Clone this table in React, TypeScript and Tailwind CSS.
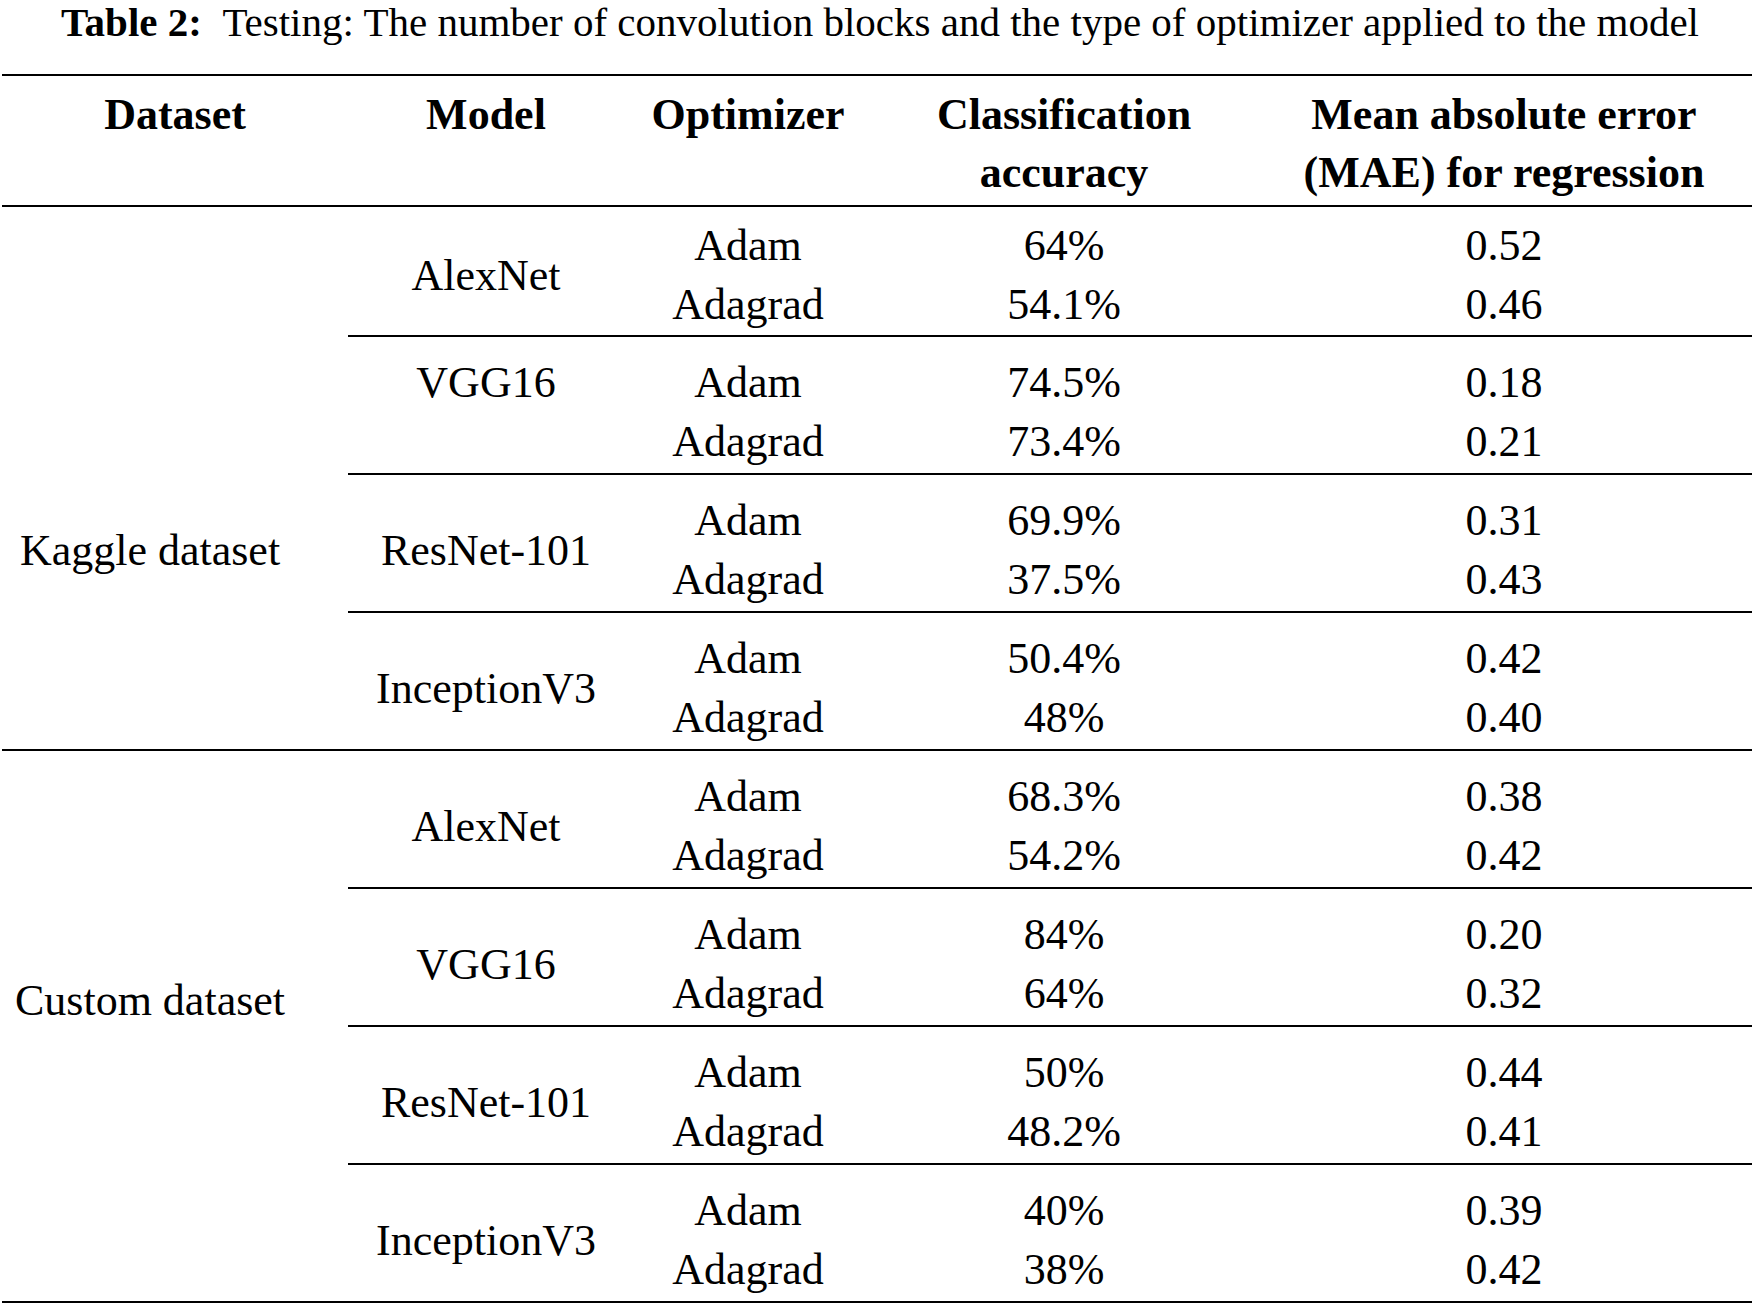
import React from "react";

type Row = { opt: string; acc: string; mae: string };
type Group = { model: string; top?: boolean; rows: Row[] };

// Results per dataset, two optimizers per model
const kaggle: Group[] = [
  { model: "AlexNet", rows: [{ opt: "Adam", acc: "64%", mae: "0.52" }, { opt: "Adagrad", acc: "54.1%", mae: "0.46" }] },
  { model: "VGG16", top: true, rows: [{ opt: "Adam", acc: "74.5%", mae: "0.18" }, { opt: "Adagrad", acc: "73.4%", mae: "0.21" }] },
  { model: "ResNet-101", rows: [{ opt: "Adam", acc: "69.9%", mae: "0.31" }, { opt: "Adagrad", acc: "37.5%", mae: "0.43" }] },
  { model: "InceptionV3", rows: [{ opt: "Adam", acc: "50.4%", mae: "0.42" }, { opt: "Adagrad", acc: "48%", mae: "0.40" }] },
];

const custom: Group[] = [
  { model: "AlexNet", rows: [{ opt: "Adam", acc: "68.3%", mae: "0.38" }, { opt: "Adagrad", acc: "54.2%", mae: "0.42" }] },
  { model: "VGG16", rows: [{ opt: "Adam", acc: "84%", mae: "0.20" }, { opt: "Adagrad", acc: "64%", mae: "0.32" }] },
  { model: "ResNet-101", rows: [{ opt: "Adam", acc: "50%", mae: "0.44" }, { opt: "Adagrad", acc: "48.2%", mae: "0.41" }] },
  { model: "InceptionV3", rows: [{ opt: "Adam", acc: "40%", mae: "0.39" }, { opt: "Adagrad", acc: "38%", mae: "0.42" }] },
];

const GroupRow = ({ g, first, firstOfTable }: { g: Group; first: boolean; firstOfTable: boolean }) => (
  <div
    className={
      "flex " +
      (first ? "" : "border-t-2 border-black ") +
      (firstOfTable ? "pt-[9px] pb-[1px]" : "pt-4 pb-[2px]")
    }
  >
    <div className={"w-[276px] flex justify-center " + (g.top ? "items-start" : "items-center")}>
      {g.model}
    </div>
    <div className="flex flex-col">
      {g.rows.map((r, i) => (
        <div key={i} className="flex">
          <div className="w-[248px] text-center">{r.opt}</div>
          <div className="w-[384px] text-center">{r.acc}</div>
          <div className="w-[496px] text-center">{r.mae}</div>
        </div>
      ))}
    </div>
  </div>
);

const Section = ({ label, groups, labelPad, firstOfTable }: { label: string; groups: Group[]; labelPad: string; firstOfTable?: boolean }) => (
  <div className={"flex " + (firstOfTable ? "" : "border-t-2 border-black")}>
    <div className={"w-[346px] pr-[50px] text-center " + labelPad}>{label}</div>
    <div className="flex-1 flex flex-col">
      {groups.map((g, i) => (
        <GroupRow key={i} g={g} first={i === 0} firstOfTable={!!firstOfTable && i === 0} />
      ))}
    </div>
  </div>
);

export default function App() {
  return (
    <div className="w-[1755px] h-[1306px] bg-white text-black font-['Liberation_Serif','Times_New_Roman',serif] overflow-hidden">
      <div className="text-center text-[41px] leading-[45px] pl-[5px]">
        <span className="font-bold">Table 2:</span>&nbsp;&nbsp;Testing: The number of convolution blocks and the type of optimizer applied to the model
      </div>

      <div className="mt-[29px] ml-[2px] w-[1750px] border-t-2 border-b-2 border-black text-[44px] leading-[59px]">
        {/* header */}
        <div className="flex font-bold leading-[58px] pt-[10px] pb-[3px] border-b-2 border-black">
          <div className="w-[346px] text-center">Dataset</div>
          <div className="w-[276px] text-center">Model</div>
          <div className="w-[248px] text-center">Optimizer</div>
          <div className="w-[384px] text-center">
            Classification
            <br />
            accuracy
          </div>
          <div className="w-[496px] text-center">
            Mean absolute error
            <br />
            (MAE) for regression
          </div>
        </div>

        <Section label="Kaggle dataset" groups={kaggle} labelPad="pt-[314px]" firstOfTable />
        <Section label="Custom dataset" groups={custom} labelPad="pt-[220px]" />
      </div>
    </div>
  );
}
